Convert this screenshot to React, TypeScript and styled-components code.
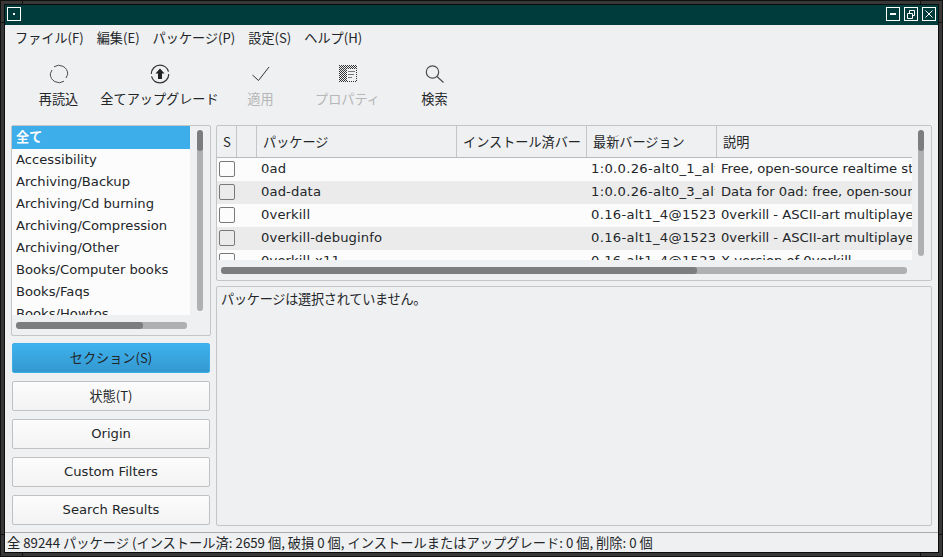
import React from "react";
import styled, { createGlobalStyle } from "styled-components";

const GlobalStyle = createGlobalStyle`
  html, body {
    margin: 0;
    padding: 0;
    background: #000;
  }
`;

const uiFont = `"DejaVu Sans", "Noto Sans CJK JP", sans-serif`;
const cjkFont = `"Noto Sans CJK JP", "DejaVu Sans", sans-serif`;

const Frame = styled.div`
  position: relative;
  width: 943px;
  height: 557px;
  box-sizing: border-box;
  background: #383838;
  border: 1px solid #111;
  padding: 3px;
`;

// resize handle notches drawn by the window manager over the frame
const FrameTick = styled.div<{ $x: number; $y: number; $across?: boolean }>`
  position: absolute;
  left: ${(p) => p.$x}px;
  top: ${(p) => p.$y}px;
  width: ${(p) => (p.$across ? 4 : 1)}px;
  height: ${(p) => (p.$across ? 1 : 4)}px;
  background: #111;
`;

const Window = styled.div`
  height: 100%;
  box-sizing: border-box;
  border: 1px solid #0c0c0c;
  background: #eff0f1;
  display: flex;
  flex-direction: column;
  font-family: ${uiFont};
  font-size: 13.15px;
  color: #232629;
`;

const TitleBar = styled.div`
  height: 18px;
  flex: none;
  background: #003c3c;
  display: flex;
  align-items: flex-start;
  justify-content: space-between;
  padding: 2px 2px 0;
`;

const TitleButtons = styled.div`
  display: flex;
  gap: 4px;
`;

const TitleButton = styled.div`
  width: 14px;
  height: 14px;
  svg {
    display: block;
  }
`;

const MenuBar = styled.div`
  height: 27px;
  flex: none;
  display: flex;
  align-items: center;
  padding: 0 4px 2px;
  box-sizing: border-box;
  font-family: ${cjkFont};
`;

const MenuItem = styled.div`
  padding: 0 6.5px;
  white-space: nowrap;
  line-height: 20px;
  &:first-child {
    padding-left: 6px;
  }
`;

const ToolBar = styled.div`
  height: 66px;
  flex: none;
  display: flex;
  padding-left: 10px;
`;

const ToolItem = styled.div<{ $width?: number; $disabled?: boolean }>`
  width: ${(p) => p.$width || 87}px;
  display: flex;
  flex-direction: column;
  align-items: center;
  padding-top: 11px;
  gap: 5px;
  white-space: nowrap;
  color: ${(p) => (p.$disabled ? "#b5b6b8" : "#232629")};
  svg {
    display: block;
    flex: none;
  }
`;

const ToolIcon = styled.svg`
  width: 22px;
  height: 22px;
`;

const ToolLabel = styled.div`
  height: 18px;
  line-height: 18px;
  font-family: ${cjkFont};
`;

const Main = styled.div`
  flex: 1;
  min-height: 0;
  display: flex;
  gap: 5px;
  padding: 7px 6px 6px 6px;
`;

const LeftColumn = styled.div`
  width: 200px;
  flex: none;
  display: flex;
  flex-direction: column;
`;

const Panel = styled.div`
  box-sizing: border-box;
  border: 1px solid #c3c5c6;
  border-radius: 2px;
`;

const ListPanel = styled(Panel)`
  height: 211px;
  flex: none;
  display: grid;
  grid-template-columns: 178px 1fr;
  grid-template-rows: 189px 1fr;
`;

const SectionList = styled.div`
  background: #fcfcfc;
  overflow: hidden;
`;

const SectionItem = styled.div<{ $selected?: boolean }>`
  height: 22px;
  line-height: 22px;
  padding-left: 4px;
  white-space: nowrap;
  &:first-child {
    height: 23px;
    line-height: 23px;
  }
  background: ${(p) => (p.$selected ? "#3daee9" : "transparent")};
  color: ${(p) => (p.$selected ? "#fcfcfc" : "#232629")};
  font-weight: ${(p) => (p.$selected ? 700 : 400)};
`;

const VerticalGutter = styled.div`
  display: flex;
  justify-content: center;
  padding: 4px 0;
`;

const HorizontalGutter = styled.div`
  display: flex;
  align-items: center;
  padding-left: 4px;
`;

const Track = styled.div<{ $vertical?: boolean; $length: number }>`
  background: #aeb0b1;
  border-radius: 3px;
  overflow: hidden;
  ${(p) =>
    p.$vertical
      ? `width: 6px; height: ${p.$length}px;`
      : `height: 7px; width: ${p.$length}px;`}
`;

const Thumb = styled.div<{ $vertical?: boolean; $length: number }>`
  background: #7b7d7f;
  border-radius: 3px;
  ${(p) =>
    p.$vertical
      ? `width: 100%; height: ${p.$length}px;`
      : `height: 100%; width: ${p.$length}px;`}
`;

const ButtonStack = styled.div`
  display: flex;
  flex-direction: column;
  gap: 8px;
  margin-top: 7px;
  padding: 0 1px;
`;

const FilterButton = styled.div<{ $active?: boolean }>`
  box-sizing: border-box;
  height: 30px;
  width: 198px;
  display: flex;
  align-items: center;
  justify-content: center;
  padding-bottom: 2px;
  border-radius: 2px;
  font-family: ${cjkFont};
  border: 1px solid ${(p) => (p.$active ? "#3daee9" : "#bfc1c2")};
  background: ${(p) =>
    p.$active
      ? "linear-gradient(#3db2ee, #3498d0)"
      : "linear-gradient(#fcfcfc, #f3f3f3)"};
`;

const LatinLabel = styled.span`
  font-family: ${uiFont};
`;

const RightColumn = styled.div`
  flex: 1;
  min-width: 0;
  display: flex;
  flex-direction: column;
  gap: 5px;
`;

const TablePanel = styled(Panel)`
  height: 156px;
  flex: none;
  display: grid;
  grid-template-columns: 695px 1fr;
  grid-template-rows: 134px 1fr;
`;

const TableArea = styled.div`
  overflow: hidden;
  width: 695px;
`;

const columns = "20px 20px 200px 130px 130px 195px";

const HeaderRow = styled.div`
  height: 32px;
  display: grid;
  grid-template-columns: ${columns};
  width: 715px;
  box-sizing: border-box;
  border-bottom: 1px solid #b8babb;
  font-family: ${cjkFont};
`;

const HeaderCell = styled.div<{ $center?: boolean }>`
  box-sizing: border-box;
  line-height: 32px;
  padding-left: ${(p) => (p.$center ? 1 : 6)}px;
  text-align: ${(p) => (p.$center ? "center" : "left")};
  border-right: 1px solid #c3c5c6;
  white-space: nowrap;
  overflow: hidden;
  &:last-child {
    border-right: 0;
  }
`;

const Row = styled.div<{ $alt?: boolean }>`
  height: 23px;
  display: grid;
  grid-template-columns: ${columns};
  width: 715px;
  background: ${(p) => (p.$alt ? "#ebebeb" : "#fcfcfc")};
`;

const Cell = styled.div`
  line-height: 22px;
  padding-left: 4px;
  white-space: nowrap;
  overflow: hidden;
`;

const NameCell = styled(Cell)`
  letter-spacing: 0.12px;
`;

const VersionCell = styled(Cell)`
  letter-spacing: 0.3px;
  margin-right: 2px;
`;

const CheckCell = styled.div`
  padding: 3px 0 0 2px;
  width: 16px;
`;

const CheckBox = styled.div`
  box-sizing: border-box;
  width: 16px;
  height: 16px;
  border: 1px solid #77797b;
  border-radius: 2px;
`;

const TableVerticalGutter = styled(VerticalGutter)`
  justify-content: flex-start;
  padding: 4px 0 0 6px;
`;

const DetailPanel = styled(Panel)`
  flex: 1;
  min-height: 0;
  padding: 3px 4px;
  line-height: 18px;
  letter-spacing: -0.25px;
  font-family: ${cjkFont};
`;

const StatusBar = styled.div`
  height: 20px;
  flex: none;
  box-sizing: border-box;
  border-top: 1px solid #a9abac;
  padding-left: 2px;
  line-height: 19px;
  white-space: nowrap;
  font-family: "Noto Sans CJK JP", sans-serif;
  font-size: 13.25px;
`;

const sections = [
  "Accessibility",
  "Archiving/Backup",
  "Archiving/Cd burning",
  "Archiving/Compression",
  "Archiving/Other",
  "Books/Computer books",
  "Books/Faqs",
  "Books/Howtos",
];

const packages = [
  ["0ad", "1:0.0.26-alt0_1_alt1", "Free, open-source realtime strategy game"],
  ["0ad-data", "1:0.0.26-alt0_3_alt1", "Data for 0ad: free, open-source realtime"],
  ["0verkill", "0.16-alt1_4@1523456", "0verkill - ASCII-art multiplayer game"],
  ["0verkill-debuginfo", "0.16-alt1_4@1523456", "0verkill - ASCII-art multiplayer game"],
  ["0verkill-x11", "0.16-alt1_4@1523456", "X version of 0verkill"],
];

const menus = ["ファイル(F)", "編集(E)", "パッケージ(P)", "設定(S)", "ヘルプ(H)"];

const ticks = [
  { x: 21, y: -1 },
  { x: 919, y: -1 },
  { x: 21, y: 552 },
  { x: 919, y: 552 },
  { x: -1, y: 21, across: true },
  { x: 937, y: 21, across: true },
  { x: -1, y: 533, across: true },
  { x: 937, y: 533, across: true },
];

const BoxOutline = () => (
  <rect x="0.5" y="0.5" width="13" height="13" fill="none" stroke="#fff" />
);

const ReloadIcon = () => (
  <ToolIcon viewBox="0 0 22 22" fill="none" stroke="#4d4d4d" strokeWidth="1">
    <path d="M6 3.800A8.800 8.800 0 0 1 19.700 11.200L18 15" />
    <path d="M16 18.200A8.800 8.800 0 0 1 2.300 10.800L4 7" />
  </ToolIcon>
);

const UpgradeIcon = () => (
  <ToolIcon viewBox="0 0 22 22" fill="none">
    <circle cx="11" cy="11" r="8.800" stroke="#333" strokeWidth="1.200" strokeDasharray="25 2.600" />
    <path d="M11 5.500l4.500 5H13V16H9v-5.500H6.500z" fill="#222" />
  </ToolIcon>
);

const CheckIcon = () => (
  <ToolIcon viewBox="0 0 22 22" fill="none" stroke="#333" strokeWidth="1">
    <path d="M2.500 12L8.500 17.500L19 4" />
  </ToolIcon>
);

const PropertiesIcon = () => (
  <ToolIcon viewBox="0 0 22 22" shapeRendering="crispEdges">
    <defs>
      <pattern id="dither" width="2" height="2" patternUnits="userSpaceOnUse">
        <rect width="1" height="1" fill="#333" />
        <rect x="1" y="1" width="1" height="1" fill="#333" />
      </pattern>
    </defs>
    <rect x="2.500" y="2.500" width="17" height="16" fill="none" stroke="url(#dither)" />
    <rect x="2" y="2" width="18" height="4" fill="url(#dither)" />
    <rect x="3" y="6" width="7" height="12" fill="url(#dither)" />
    <path d="M11 8.500h7M11 11.500h6M11 14.500h4" stroke="#777" fill="none" />
  </ToolIcon>
);

const SearchIcon = () => (
  <ToolIcon viewBox="0 0 22 22" fill="none" stroke="#4d4d4d" strokeWidth="1.200">
    <circle cx="8.500" cy="9" r="6.200" />
    <path d="M13 13.500L19.500 19.500" />
  </ToolIcon>
);

const App = () => {
  return (
    <Frame>
      <GlobalStyle />
      {ticks.map((t) => (
        <FrameTick key={`${t.x}-${t.y}`} $x={t.x} $y={t.y} $across={t.across} />
      ))}
      <Window>
        <TitleBar>
          <TitleButton>
            <svg width="14" height="14">
              <BoxOutline />
              <rect x="6" y="6" width="2" height="2" fill="#fff" />
            </svg>
          </TitleButton>
          <TitleButtons>
            <TitleButton>
              <svg width="14" height="14">
                <BoxOutline />
                <rect x="4" y="6" width="6" height="2" fill="#fff" />
              </svg>
            </TitleButton>
            <TitleButton>
              <svg width="14" height="14">
                <BoxOutline />
                <path d="M3.500 6.500h5v5h-5zM5.500 6V3.500h5v5H9" fill="none" stroke="#fff" />
              </svg>
            </TitleButton>
            <TitleButton>
              <svg width="14" height="14">
                <BoxOutline />
                <path d="M3.500 3.500l7 7M10.500 3.500l-7 7" fill="none" stroke="#fff" />
              </svg>
            </TitleButton>
          </TitleButtons>
        </TitleBar>

        <MenuBar>
          {menus.map((m) => (
            <MenuItem key={m}>{m}</MenuItem>
          ))}
        </MenuBar>

        <ToolBar>
          <ToolItem>
            <ReloadIcon />
            <ToolLabel>再読込</ToolLabel>
          </ToolItem>
          <ToolItem $width={115}>
            <UpgradeIcon />
            <ToolLabel>全てアップグレード</ToolLabel>
          </ToolItem>
          <ToolItem $disabled>
            <CheckIcon />
            <ToolLabel>適用</ToolLabel>
          </ToolItem>
          <ToolItem $disabled>
            <PropertiesIcon />
            <ToolLabel>プロパティ</ToolLabel>
          </ToolItem>
          <ToolItem>
            <SearchIcon />
            <ToolLabel>検索</ToolLabel>
          </ToolItem>
        </ToolBar>

        <Main>
          <LeftColumn>
            <ListPanel>
              <SectionList>
                <SectionItem $selected>全て</SectionItem>
                {sections.map((s) => (
                  <SectionItem key={s}>{s}</SectionItem>
                ))}
              </SectionList>
              <VerticalGutter>
                <Track $vertical $length={181}>
                  <Thumb $vertical $length={21} />
                </Track>
              </VerticalGutter>
              <HorizontalGutter>
                <Track $length={171}>
                  <Thumb $length={127} />
                </Track>
              </HorizontalGutter>
            </ListPanel>
            <ButtonStack>
              <FilterButton $active>セクション(S)</FilterButton>
              <FilterButton>状態(T)</FilterButton>
              <FilterButton>
                <LatinLabel>Origin</LatinLabel>
              </FilterButton>
              <FilterButton>
                <LatinLabel>Custom Filters</LatinLabel>
              </FilterButton>
              <FilterButton>
                <LatinLabel>Search Results</LatinLabel>
              </FilterButton>
            </ButtonStack>
          </LeftColumn>

          <RightColumn>
            <TablePanel>
              <TableArea>
                <HeaderRow>
                  <HeaderCell $center>S</HeaderCell>
                  <HeaderCell />
                  <HeaderCell>パッケージ</HeaderCell>
                  <HeaderCell>インストール済バー</HeaderCell>
                  <HeaderCell>最新バージョン</HeaderCell>
                  <HeaderCell>説明</HeaderCell>
                </HeaderRow>
                {packages.map(([name, version, desc], i) => (
                  <Row key={name} $alt={i % 2 === 1}>
                    <CheckCell>
                      <CheckBox />
                    </CheckCell>
                    <div />
                    <NameCell>{name}</NameCell>
                    <div />
                    <VersionCell>{version}</VersionCell>
                    <Cell>{desc}</Cell>
                  </Row>
                ))}
              </TableArea>
              <TableVerticalGutter>
                <Track $vertical $length={126}>
                  <Thumb $vertical $length={21} />
                </Track>
              </TableVerticalGutter>
              <HorizontalGutter>
                <Track $length={686}>
                  <Thumb $length={476} />
                </Track>
              </HorizontalGutter>
            </TablePanel>
            <DetailPanel>パッケージは選択されていません。</DetailPanel>
          </RightColumn>
        </Main>

        <StatusBar>
          全 89244 パッケージ (インストール済: 2659 個, 破損 0 個, インストールまたはアップグレード: 0 個, 削除: 0 個
        </StatusBar>
      </Window>
    </Frame>
  );
};

export default App;
